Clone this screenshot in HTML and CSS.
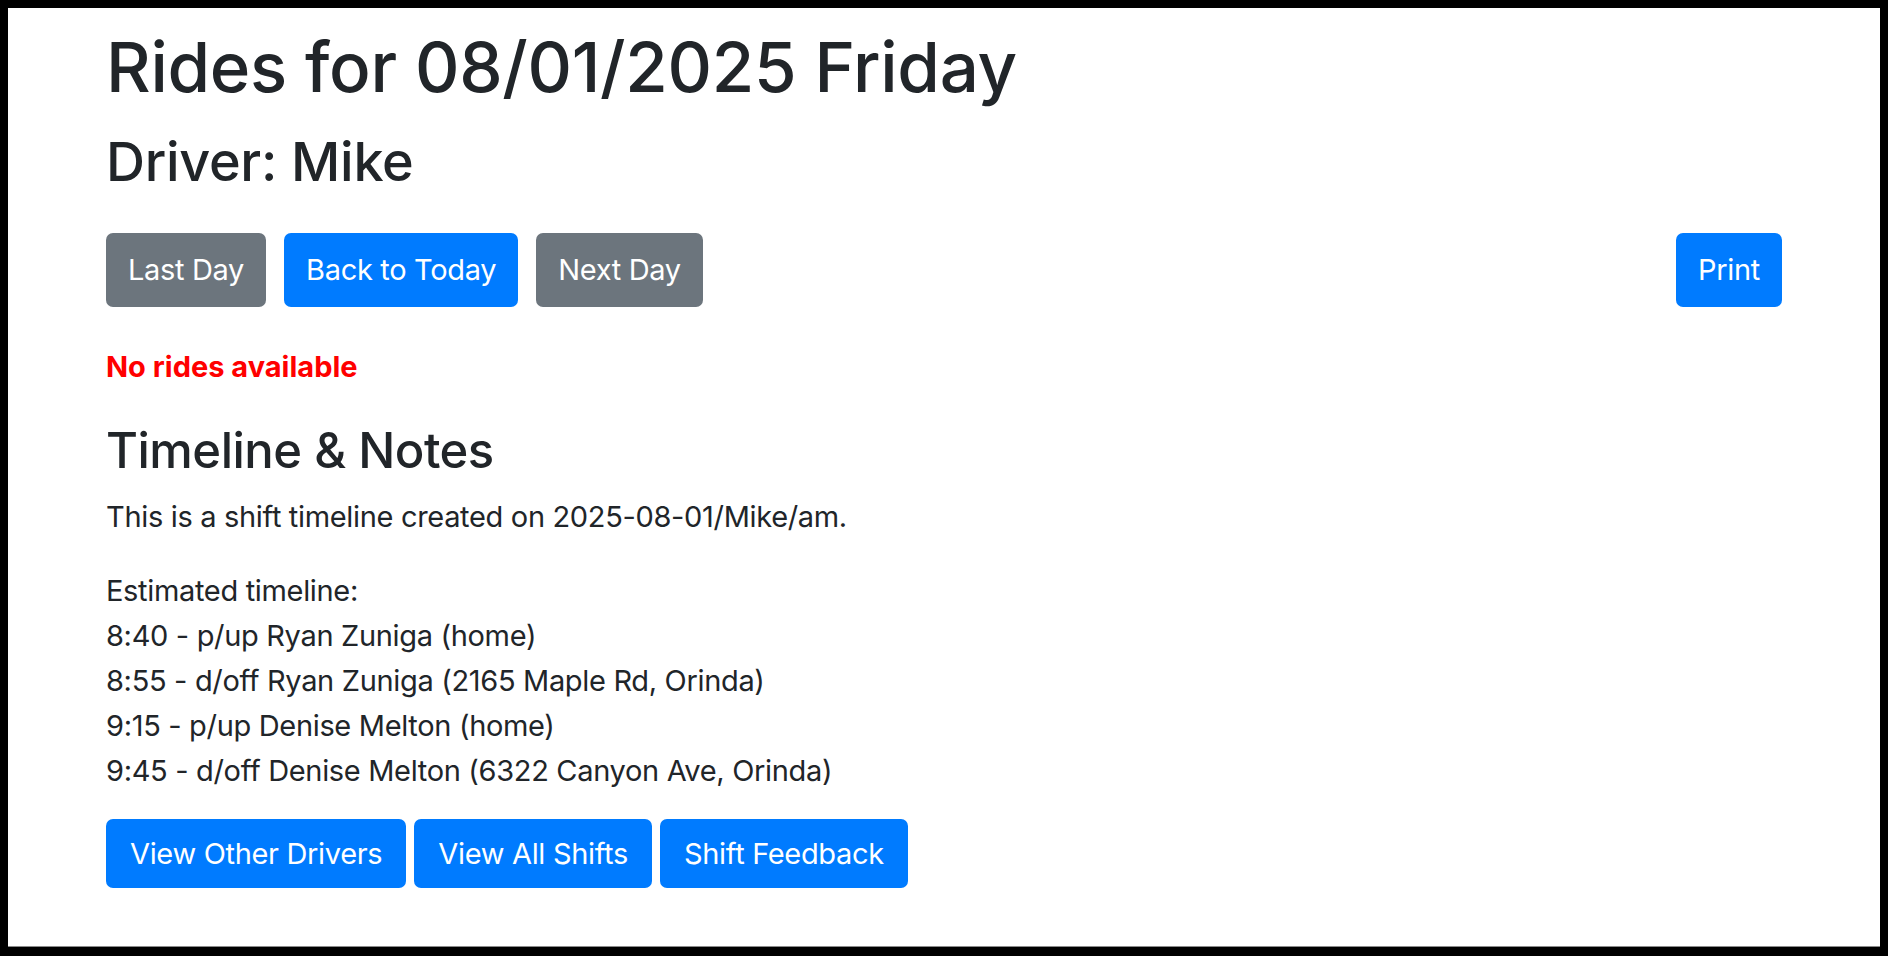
FILE: index.html
```html
<!DOCTYPE html>
<html lang="en">
<head>
<meta charset="utf-8">
<title>Rides for 08/01/2025 Friday</title>
<link rel="stylesheet" href="styles.css">
</head>
<body>
<div class="frame">
  <div class="container">
    <h1 class="title">Rides for 08/01/2025 Friday</h1>
    <h2 class="driver">Driver: Mike</h2>
    <div class="nav-row">
      <div class="nav-left">
        <button class="btn btn-gray">Last Day</button>
        <button class="btn btn-blue">Back to Today</button>
        <button class="btn btn-gray">Next Day</button>
      </div>
      <button class="btn btn-blue">Print</button>
    </div>
    <p class="no-rides">No rides available</p>
    <h3 class="section">Timeline &amp; Notes</h3>
    <p class="text intro">This is a shift timeline created on 2025-08-01/Mike/am.</p>
    <div class="text timeline">
      <div>Estimated timeline:</div>
      <div>8:40 - p/up Ryan Zuniga (home)</div>
      <div>8:55 - d/off Ryan Zuniga (2165 Maple Rd, Orinda)</div>
      <div>9:15 - p/up Denise Melton (home)</div>
      <div>9:45 - d/off Denise Melton (6322 Canyon Ave, Orinda)</div>
    </div>
    <div class="actions">
      <button class="btn btn-blue btn-sm">View Other Drivers</button>
      <button class="btn btn-blue btn-sm">View All Shifts</button>
      <button class="btn btn-blue btn-sm">Shift Feedback</button>
    </div>
  </div>
</div>
</body>
</html>
```
FILE: styles.css
```css
html, body {
  margin: 0;
  padding: 0;
}
body {
  background: #000;
  padding: 8px 8px 0 8px;
  height: 956px;
  box-sizing: border-box;
  font-family: Inter, "Liberation Sans", sans-serif;
  color: #212529;
}
.frame {
  background: #fff;
  height: 939px;
  box-sizing: border-box;
  border-bottom: 1px solid #8a8a8a;
  padding-top: 18px;
}
.container {
  width: 1676px;
  margin: 0 auto;
}
.title {
  font-size: 69px;
  font-weight: 500;
  line-height: 83px;
  margin: 0;
  letter-spacing: -0.3px;
}
.driver {
  font-size: 54px;
  font-weight: 500;
  line-height: 65px;
  margin: 20px 0 0 0;
  letter-spacing: -0.3px;
}
.nav-row {
  display: flex;
  justify-content: space-between;
  align-items: flex-start;
  margin-top: 39px;
}
.nav-left {
  display: flex;
  gap: 18px;
}
.btn {
  font-family: inherit;
  font-size: 29px;
  line-height: 46px;
  letter-spacing: -0.33px;
  padding: 14px 22px;
  border: 0;
  border-radius: 7px;
  color: #fff;
  cursor: pointer;
  white-space: nowrap;
}
.btn-gray { background: #6c757d; }
.btn-blue { background: #007bff; }
.no-rides {
  margin: 37px 0 0 0;
  color: #ff0000;
  font-weight: 700;
  font-size: 29px;
  line-height: 45px;
}
.section {
  font-size: 49px;
  font-weight: 500;
  line-height: 59px;
  margin: 32px 0 0 0;
  letter-spacing: -0.5px;
}
.text {
  font-size: 29px;
  line-height: 45px;
  letter-spacing: -0.33px;
}
.intro {
  margin: 14px 0 0 0;
}
.timeline {
  margin-top: 29px;
}
.actions {
  display: flex;
  gap: 8px;
  margin-top: 26px;
}
.btn-sm {
  padding: 12px 24px 11px;
}
```
